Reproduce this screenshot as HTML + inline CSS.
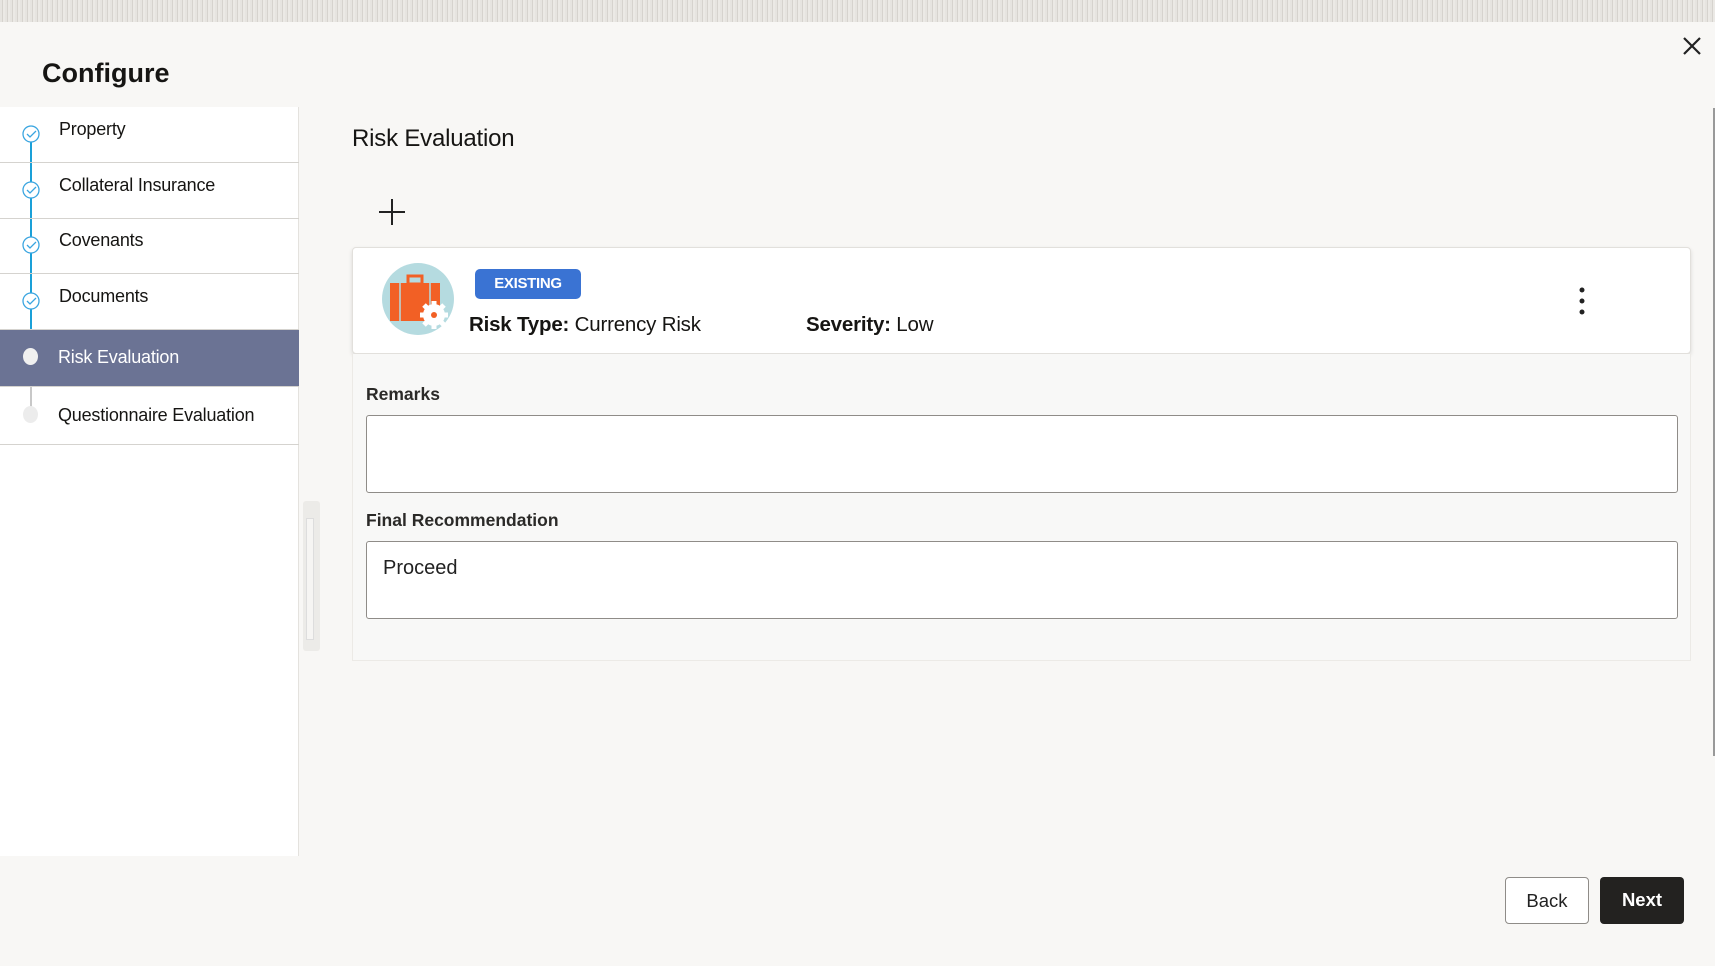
<!DOCTYPE html>
<html><head><meta charset="utf-8"><style>
*{box-sizing:border-box;margin:0;padding:0}
body{width:1715px;height:966px;overflow:hidden;background:#f8f7f5;font-family:"Liberation Sans",sans-serif;color:#161513;position:relative}
.top{position:absolute;left:0;top:0;width:1715px;height:22px;background:repeating-linear-gradient(90deg,#e6e4e0 0 2px,#d6d3ce 2px 3px,#ebe9e5 3px 5px)}
.abs{position:absolute}
.side{position:absolute;left:0;top:107px;width:299px;height:749px;background:#fff;border-right:1px solid #e4e2de}
.row{position:absolute;left:0;width:299px;border-bottom:1px solid #d5d3cf;font-size:18px;color:#161513;letter-spacing:-0.2px}
.row span{position:absolute;left:59px}
.sel{background:#6b7394;color:#fff}
.card{position:absolute;left:352px;top:247px;width:1339px;height:107px;background:#fff;border:1px solid #e2e0dc;border-radius:4px;box-shadow:0 2px 4px rgba(0,0,0,.12)}
.panel{position:absolute;left:352px;top:354px;width:1339px;height:307px;background:#f8f8f7;border:1px solid #eceae6;border-top:none}
.lbl{position:absolute;left:366px;font-size:17.5px;font-weight:bold;color:#2b2a28}
.inp{position:absolute;left:366px;width:1312px;height:78px;background:#fff;border:1px solid #8f8c88;border-radius:3px}
.btn{position:absolute;top:877px;height:47px;border-radius:4px;font-size:18.5px;font-weight:bold;text-align:center;line-height:45px}
</style></head><body>
<div class="top"></div>
<div class="abs" style="left:42px;top:58px;font-size:27px;font-weight:bold">Configure</div>
<svg class="abs" style="left:1682px;top:36px" width="20" height="20"><path d="M2 2L18 18M18 2L2 18" stroke="#222" stroke-width="2.2"/></svg>
<div class="abs" style="left:1713px;top:108px;width:2px;height:648px;background:#999"></div>
<div class="side">
 <div class="abs" style="left:30px;top:26px;width:2px;height:215px;background:#1aa0d8"></div>
 <div class="abs" style="left:30px;top:240px;width:2px;height:60px;background:#c8c8c8"></div>
 <div class="row" style="top:0;height:56px"><span style="top:12px">Property</span></div>
 <div class="row" style="top:56px;height:56px"><span style="top:12px">Collateral Insurance</span></div>
 <div class="row" style="top:112px;height:55px"><span style="top:11px">Covenants</span></div>
 <div class="row" style="top:167px;height:56px"><span style="top:12px">Documents</span></div>
 <div class="row sel" style="top:223px;height:57px"><span style="top:17px;left:58px">Risk Evaluation</span></div>
 <div class="row" style="top:280px;height:58px"><span style="top:18px;left:58px">Questionnaire Evaluation</span></div>
 <svg class="abs" style="left:20px;top:17px" width="24" height="240">
  <g fill="#fff" stroke="#3aa5e0" stroke-width="1.3">
   <circle cx="11" cy="10" r="8"/><circle cx="11" cy="66" r="8"/><circle cx="11" cy="121" r="8"/><circle cx="11" cy="177" r="8"/>
  </g>
  <g fill="none" stroke="#3aa5e0" stroke-width="1.3">
   <path d="M7 10l3 3 6-6"/><path d="M7 66l3 3 6-6"/><path d="M7 121l3 3 6-6"/><path d="M7 177l3 3 6-6"/>
  </g>
 </svg>
 <div class="abs" style="left:23px;top:241px;width:15px;height:17px;border-radius:50%;background:#f0f0f0"></div>
 <div class="abs" style="left:23px;top:299px;width:15px;height:17px;border-radius:50%;background:#ececec"></div>
</div>
<div class="abs" style="left:303px;top:501px;width:17px;height:150px;background:#ecebe8;border-radius:3px"></div>
<div class="abs" style="left:306px;top:518px;width:8px;height:122px;background:#f6f5f3;border:1px solid #ddd"></div>
<div class="abs" style="left:352px;top:125px;font-size:24px;letter-spacing:-0.2px">Risk Evaluation</div>
<svg class="abs" style="left:378px;top:198px" width="28" height="28"><path d="M14 1V27M1 14H27" stroke="#222" stroke-width="2"/></svg>
<div class="card"></div>
<svg class="abs" style="left:382px;top:263px" width="74" height="72">
 <ellipse cx="36" cy="36" rx="36" ry="36" fill="#b5dbe0"/>
 <rect x="8" y="20" width="50" height="38" fill="#f26025"/>
 <rect x="26" y="13" width="14" height="8" fill="none" stroke="#f26025" stroke-width="3"/>
 <path d="M18 20V58M48 20V58" stroke="#b5dbe0" stroke-width="1.5"/>
 <circle cx="52" cy="52" r="11" fill="#fff"/>
 <g stroke="#fff" stroke-width="5"><path d="M52 38V66M38 52H66M42 42L62 62M62 42L42 62"/></g>
 <circle cx="52" cy="52" r="3" fill="#f26025"/>
</svg>
<div class="abs" style="left:475px;top:269px;width:106px;height:30px;background:#3a73d3;border-radius:5px;color:#fff;font-weight:bold;font-size:15px;text-align:center;line-height:30px;letter-spacing:-0.3px">EXISTING</div>
<div class="abs" style="left:469px;top:313px;font-size:20.5px;letter-spacing:-0.2px"><b>Risk Type:</b> Currency Risk</div>
<div class="abs" style="left:806px;top:313px;font-size:20.5px;letter-spacing:-0.2px"><b>Severity:</b> Low</div>
<svg class="abs" style="left:1576px;top:286px" width="12" height="30"><g fill="#222"><circle cx="6" cy="4" r="2.5"/><circle cx="6" cy="15" r="2.5"/><circle cx="6" cy="26" r="2.5"/></g></svg>
<div class="panel"></div>
<div class="lbl" style="top:384px">Remarks</div>
<div class="inp" style="top:415px"></div>
<div class="lbl" style="top:510px">Final Recommendation</div>
<div class="inp" style="top:541px"></div>
<div class="abs" style="left:383px;top:557px;font-size:20px;color:#222">Proceed</div>
<div class="btn" style="left:1505px;width:84px;border:1px solid #8f8c88;background:#fff;color:#222;font-weight:normal">Back</div>
<div class="btn" style="left:1600px;width:84px;background:#232220;color:#fff">Next</div>
</body></html>
